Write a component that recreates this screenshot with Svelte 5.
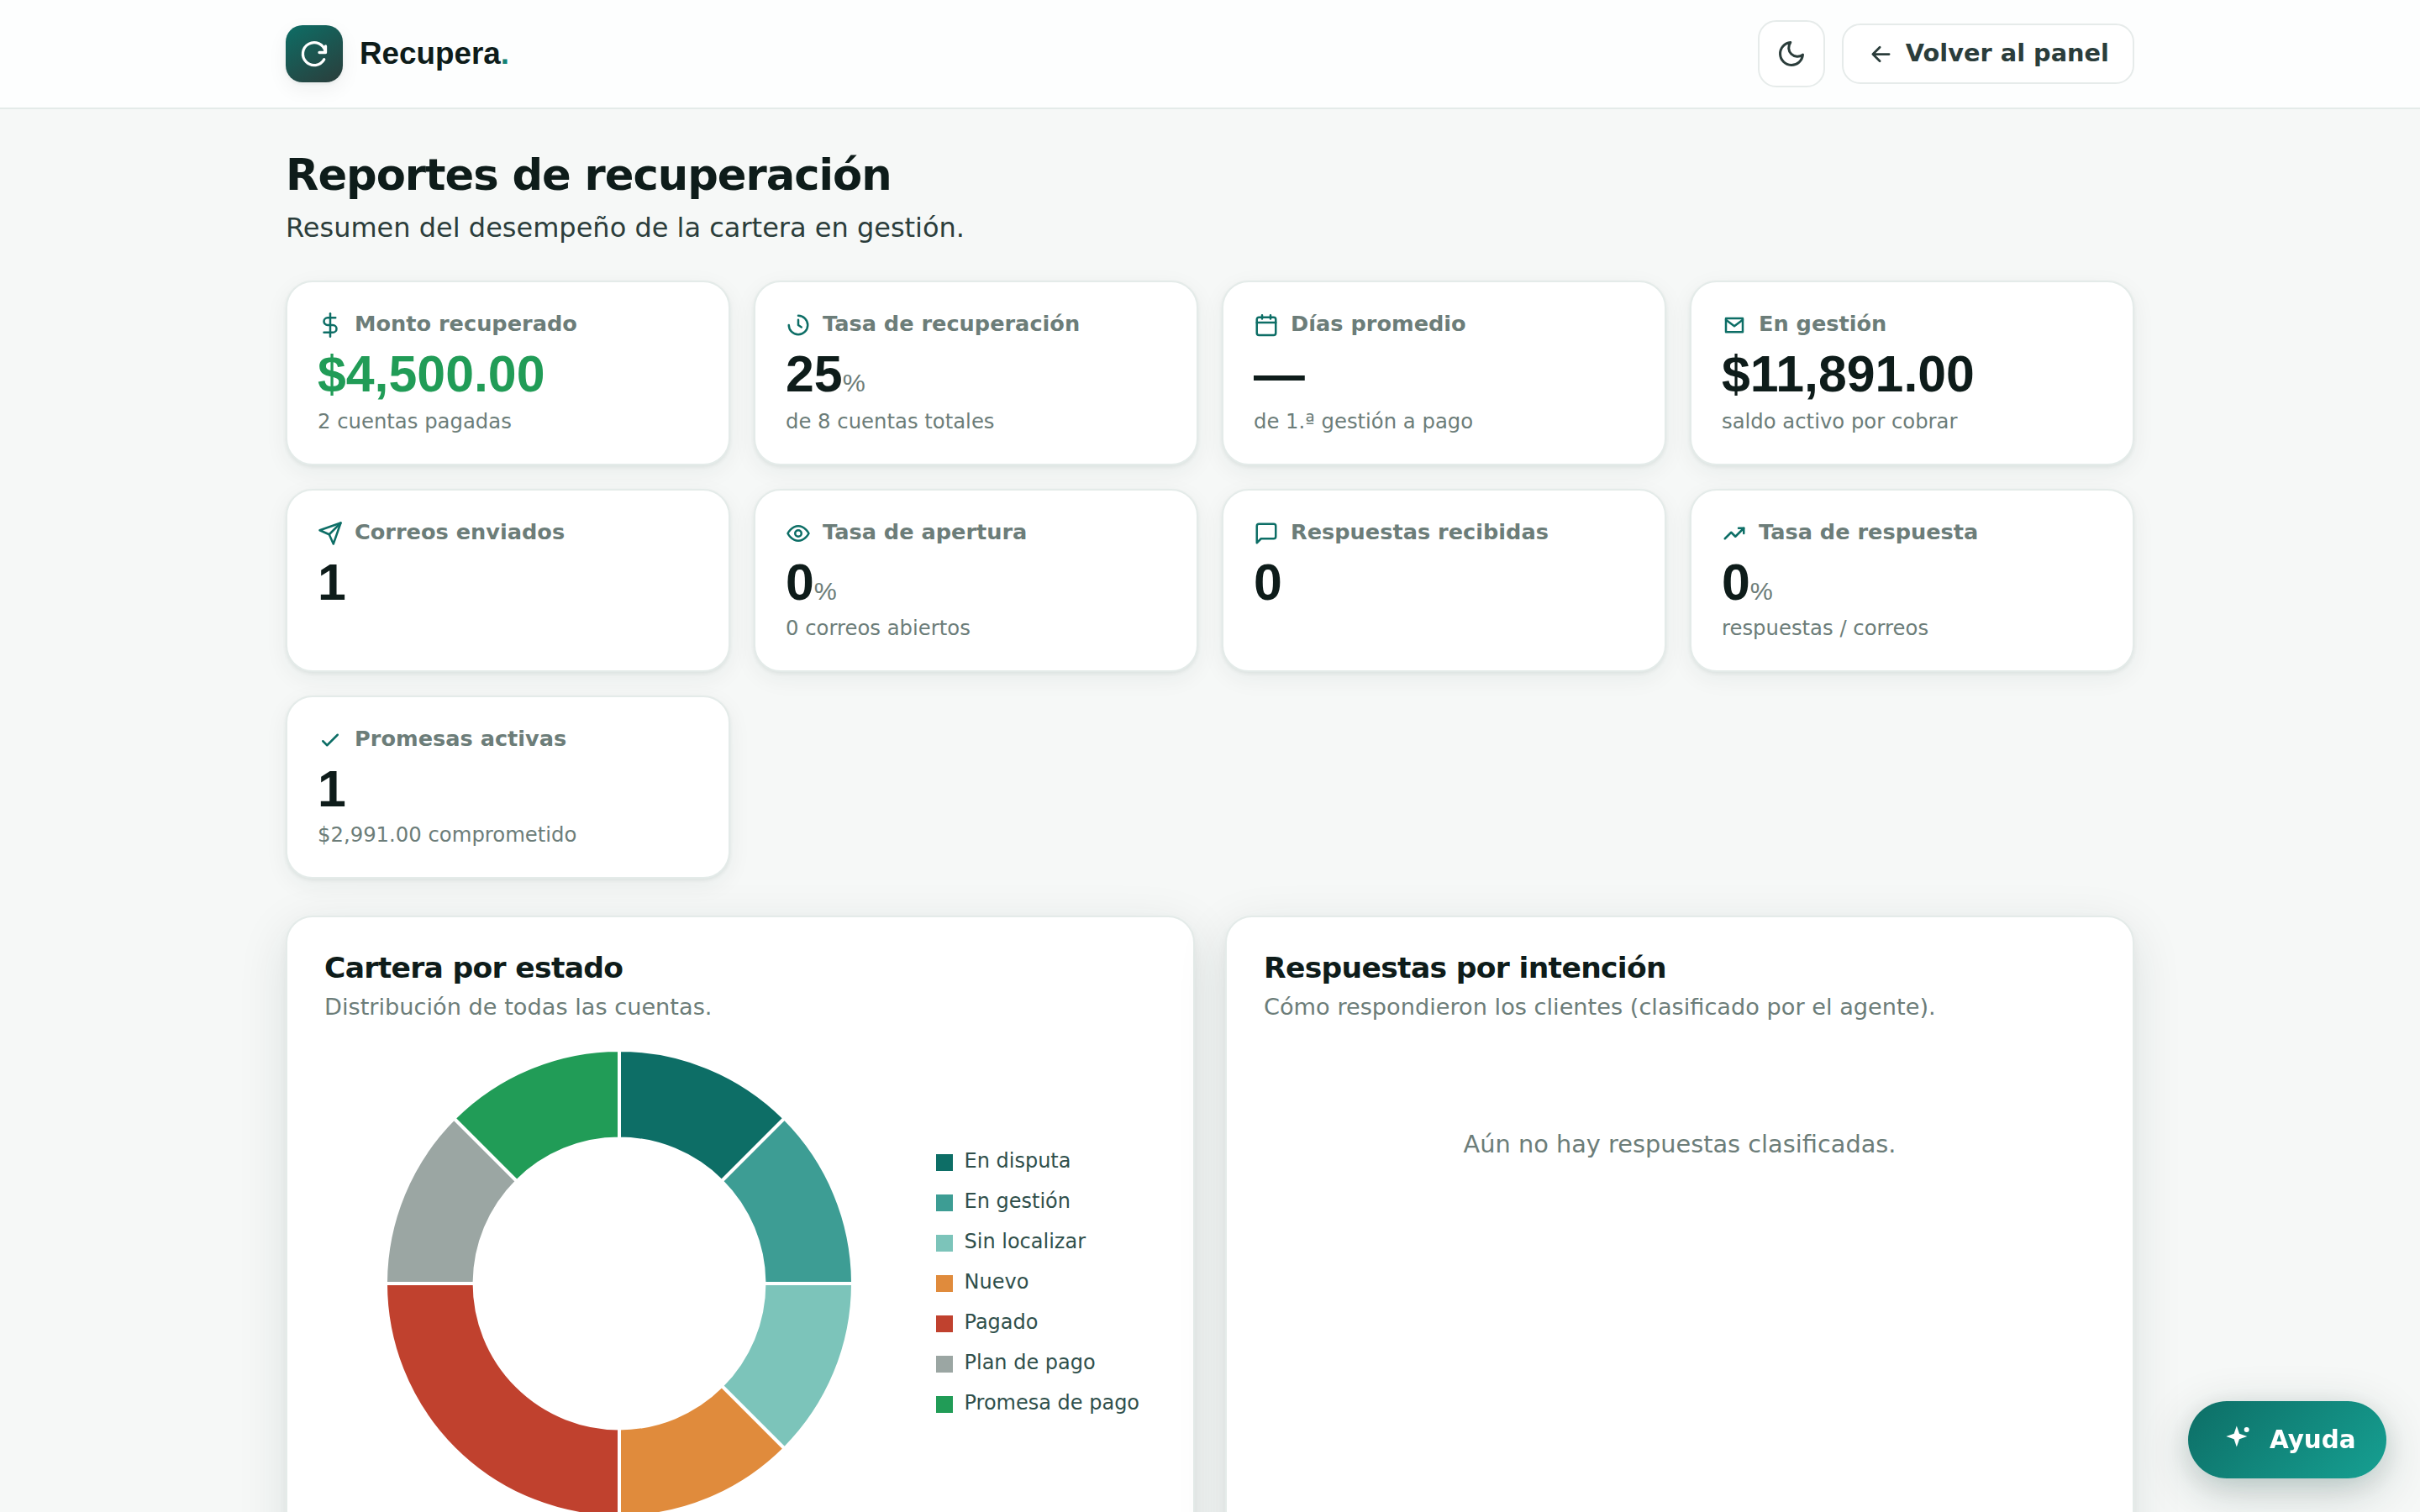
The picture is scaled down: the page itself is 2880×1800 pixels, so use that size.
<script>
  const cards = [
    { icon: 'dollar', label: 'Monto recuperado', value: '$4,500.00', note: '2 cuentas pagadas', tone: 'good' },
    { icon: 'clock', label: 'Tasa de recuperación', value: '25', unit: '%', note: 'de 8 cuentas totales' },
    { icon: 'calendar', label: 'Días promedio', value: '—', note: 'de 1.ª gestión a pago' },
    { icon: 'mail', label: 'En gestión', value: '$11,891.00', note: 'saldo activo por cobrar' },
    { icon: 'send', label: 'Correos enviados', value: '1' },
    { icon: 'eye', label: 'Tasa de apertura', value: '0', unit: '%', note: '0 correos abiertos' },
    { icon: 'message', label: 'Respuestas recibidas', value: '0' },
    { icon: 'trend', label: 'Tasa de respuesta', value: '0', unit: '%', note: 'respuestas / correos' },
    { icon: 'check', label: 'Promesas activas', value: '1', note: '$2,991.00 comprometido' }
  ];

  const icons = {
    dollar: ['M12 1v22', 'M17 5H9.5a3.5 3.5 0 0 0 0 7h5a3.5 3.5 0 0 1 0 7H6'],
    clock: ['M12 3a9 9 0 1 1-9 9', 'M12 7v5l3 2'],
    calendar: ['M5 4.5h14a2 2 0 0 1 2 2V19.5a2 2 0 0 1-2 2H5a2 2 0 0 1-2-2V6.5a2 2 0 0 1 2-2z', 'M16 2.5v3.5M8 2.5v3.5M3 9.5h18'],
    mail: ['M4 5.5h16v13H4z', 'M4 7l8 6 8-6'],
    send: ['M22 2L11 13', 'M22 2l-7 20-4-9-9-4 20-7z'],
    eye: ['M2 12s3.5-7 10-7 10 7 10 7-3.5 7-10 7-10-7-10-7z', 'M15 12a3 3 0 1 1-6 0 3 3 0 0 1 6 0z'],
    message: ['M21 15a2 2 0 0 1-2 2H7l-4 4V5a2 2 0 0 1 2-2h14a2 2 0 0 1 2 2z'],
    trend: ['M3 17l6-6 4 4 8-8', 'M16 7h5v5'],
    check: ['M5 13l4 4L19 7']
  };

  const slices = [
    { label: 'En disputa', count: 1, color: '#0d6e66' },
    { label: 'En gestión', count: 1, color: '#3d9d94' },
    { label: 'Sin localizar', count: 1, color: '#7cc4ba' },
    { label: 'Nuevo', count: 1, color: '#e08b3c' },
    { label: 'Pagado', count: 2, color: '#c0412e' },
    { label: 'Plan de pago', count: 1, color: '#9ba6a3' },
    { label: 'Promesa de pago', count: 1, color: '#219c57' }
  ];

  const outer = 278;
  const inner = 172.4;
  const total = slices.reduce((sum, s) => sum + s.count, 0);
  const point = (r, a) => `${(r * Math.sin(a)).toFixed(2)} ${(-r * Math.cos(a)).toFixed(2)}`;
  let turned = 0;
  const arcs = slices.map((s) => {
    const a = (turned / total) * 2 * Math.PI;
    turned += s.count;
    const b = (turned / total) * 2 * Math.PI;
    return {
      color: s.color,
      d: `M${point(outer, a)}A${outer} ${outer} 0 0 1 ${point(outer, b)}L${point(inner, b)}A${inner} ${inner} 0 0 0 ${point(inner, a)}Z`
    };
  });
</script>

<header class="topbar">
  <div class="wrap bar">
    <div class="brand">
      <span class="logo">
        <svg viewBox="0 0 24 24" width="36" height="36"><path d="M19.8 16.5A9 9 0 1 1 20.7 10L21 11M21 6v5h-5" /></svg>
      </span>
      <span class="name">Recupera<span class="dot">.</span></span>
    </div>
    <div class="actions">
      <button class="btn square" aria-label="Tema">
        <svg viewBox="0 0 24 24" width="36" height="36"><path d="M21 12.8A9 9 0 1 1 11.2 3a7 7 0 0 0 9.8 9.8z" /></svg>
      </button>
      <button class="btn back">
        <svg viewBox="0 0 24 24" width="33" height="33"><path d="M19 12H5M11 18l-6-6 6-6" /></svg>
        Volver al panel
      </button>
    </div>
  </div>
</header>

<main class="wrap">
  <h1>Reportes de recuperación</h1>
  <p class="lead">Resumen del desempeño de la cartera en gestión.</p>

  <section class="stats">
    {#each cards as card}
      <article class="stat">
        <div class="label">
          <svg viewBox="0 0 24 24" width="30" height="30">
            {#each icons[card.icon] as d}<path {d} />{/each}
          </svg>
          {card.label}
        </div>
        <div class="value" class:good={card.tone === 'good'}>{card.value}{#if card.unit}<small>{card.unit}</small>{/if}</div>
        {#if card.note}<div class="note">{card.note}</div>{/if}
      </article>
    {/each}
  </section>

  <section class="panels">
    <article class="panel">
      <h2>Cartera por estado</h2>
      <p class="sub">Distribución de todas las cuentas.</p>
      <div class="chart">
        <svg class="donut" viewBox="-280 -280 560 560" width="560" height="560">
          {#each arcs as arc}<path d={arc.d} fill={arc.color} />{/each}
        </svg>
        <ul class="legend">
          {#each slices as s}
            <li><span class="swatch" style="background: {s.color}"></span>{s.label}</li>
          {/each}
        </ul>
      </div>
    </article>
    <article class="panel">
      <h2>Respuestas por intención</h2>
      <p class="sub">Cómo respondieron los clientes (clasificado por el agente).</p>
      <p class="empty">Aún no hay respuestas clasificadas.</p>
    </article>
  </section>
</main>

<button class="help">
  <svg viewBox="0 0 24 24" width="40" height="40">
    <path d="M10.7 2.1l1.9 5.6 5.6 1.9-5.6 1.9-1.9 5.6-1.9-5.6-5.6-1.9 5.6-1.9z" />
    <circle cx="17.8" cy="4.8" r="1.8" />
  </svg>
  Ayuda
</button>

<style>
  :global(html) {
    overflow: hidden;
  }
  :global(body) {
    margin: 0;
    height: 1800px;
    overflow: hidden;
    background: #f6f8f7;
    color: #0e1c1a;
    font-family: 'DejaVu Sans', sans-serif;
  }
  svg {
    display: block;
    flex: none;
    fill: none;
    stroke: currentColor;
    stroke-width: 2;
    stroke-linecap: round;
    stroke-linejoin: round;
  }
  .wrap {
    width: 2200px;
    margin: 0 auto;
  }
  .topbar {
    background: #fdfefe;
    border-bottom: 2px solid #e4ebe9;
  }
  .bar {
    height: 128px;
    display: flex;
    align-items: center;
    justify-content: space-between;
  }
  .brand,
  .actions {
    display: flex;
    align-items: center;
    gap: 20px;
  }
  .logo {
    width: 68px;
    height: 68px;
    border-radius: 20px;
    display: grid;
    place-items: center;
    color: #fff;
    background: linear-gradient(150deg, #0d6e66, #2b3d3b);
    box-shadow: 0 2px 4px rgba(14, 28, 26, 0.06), 0 8px 24px rgba(14, 28, 26, 0.06);
  }
  .logo svg {
    stroke-width: 2.2;
  }
  .name {
    font: bold 36.8px 'Liberation Sans', sans-serif;
  }
  .dot {
    color: #128075;
  }
  .btn {
    box-sizing: border-box;
    display: flex;
    align-items: center;
    border: 2px solid #e6ebea;
    background: #fff;
    color: #2b3d3b;
    font: bold 28.8px 'DejaVu Sans', sans-serif;
  }
  .square {
    width: 80px;
    height: 80px;
    padding: 0;
    justify-content: center;
    border-radius: 22px;
  }
  .back {
    height: 72px;
    padding: 0 28px 2px;
    gap: 13px;
    border-radius: 22px;
  }
  .back svg {
    margin-top: 2px;
  }
  h1 {
    margin: 48px 0 0;
    font-size: 51.2px;
    line-height: 60px;
    letter-spacing: -1.024px;
  }
  .lead {
    margin: 13px 0 0;
    font-size: 32px;
    line-height: 40px;
    color: #2b3d3b;
  }
  .stats {
    margin-top: 43px;
    display: grid;
    grid-template-columns: repeat(4, 1fr);
    grid-template-rows: 220px 218px 218px;
    gap: 28px;
  }
  .stat {
    box-sizing: border-box;
    display: flex;
    flex-direction: column;
    padding: 32px 36px;
    border: 2px solid #e4ebe9;
    border-radius: 32px;
    background: #fff;
    box-shadow: 0 2px 4px rgba(14, 50, 45, 0.07), 0 8px 28px rgba(14, 50, 45, 0.06);
  }
  .label {
    display: flex;
    align-items: center;
    gap: 14px;
    height: 34px;
    font-size: 25.6px;
    font-weight: bold;
    color: #6c7d79;
  }
  .label svg {
    margin-top: 4px;
    color: #0d6e66;
  }
  .value {
    height: 66px;
    margin-top: 10px;
    font: bold 60.8px/66px 'Liberation Sans', sans-serif;
  }
  .good {
    color: #219c57;
  }
  small {
    font-size: 30.4px;
    line-height: 1;
    font-weight: normal;
    color: #6c7d79;
  }
  .note {
    margin-top: auto;
    font-size: 24.32px;
    line-height: 36px;
    color: #6c7d79;
  }
  .panels {
    margin-top: 44px;
    display: grid;
    grid-template-columns: 1fr 1fr;
    gap: 36px;
  }
  .panel {
    box-sizing: border-box;
    height: 860px;
    padding: 39px 44px;
    border: 2px solid #e4ebe9;
    border-radius: 32px;
    background: #fff;
    box-shadow: 0 4px 12px rgba(14, 50, 45, 0.04), 0 16px 60px rgba(14, 50, 45, 0.11);
  }
  h2 {
    margin: 0;
    font-size: 34.56px;
    line-height: 42px;
    letter-spacing: -0.69px;
  }
  .sub {
    margin: 8px 0 0;
    font-size: 27.2px;
    line-height: 36px;
    color: #6c7d79;
  }
  .chart {
    display: flex;
    align-items: center;
    margin-top: 31px;
    padding-left: 71px;
  }
  .donut path {
    stroke: #fff;
    stroke-width: 4;
    stroke-linejoin: miter;
  }
  .legend {
    list-style: none;
    margin: 0 0 4px 96.5px;
    padding: 0;
    color: #2f4f4b;
    font-size: 24px;
    line-height: 48px;
  }
  .legend li {
    display: flex;
    align-items: center;
  }
  .swatch {
    width: 20px;
    height: 20px;
    margin: 4px 14px 0 0;
  }
  .empty {
    margin: 125px 0 0;
    text-align: center;
    font-size: 28.8px;
    line-height: 40px;
    color: #6c7d79;
  }
  .help {
    position: fixed;
    right: 40px;
    bottom: 40px;
    width: 236px;
    height: 92px;
    border: 0;
    border-radius: 46px;
    padding: 0 0 0 40px;
    display: flex;
    align-items: center;
    gap: 17px;
    color: #fff;
    background: linear-gradient(135deg, #0d6e66, #16a092);
    box-shadow: 0 16px 60px rgba(14, 50, 45, 0.2), 0 8px 30px rgba(13, 80, 74, 0.12);
    font: bold 29.4px 'DejaVu Sans', sans-serif;
  }
  .help svg {
    fill: currentColor;
    stroke: none;
  }
</style>
